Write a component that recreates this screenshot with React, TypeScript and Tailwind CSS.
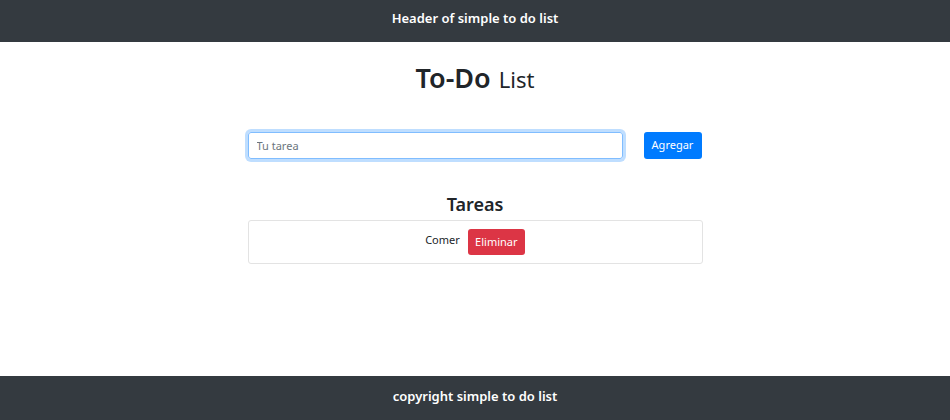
import React from "react";

export default function App() {
  return (
    <div className="flex h-[420px] w-[950px] flex-col bg-white text-[#212529]" style={{ fontFamily: '"Noto Sans", "Open Sans", sans-serif' }}>
      <header className="flex h-[42px] items-center justify-center bg-[#343a40] pb-[5px] text-[13px] font-semibold text-white">
        Header of simple to do list
      </header>
      <main className="flex flex-1 flex-col items-center">
        <h1 className="mt-[16px] flex items-baseline gap-[8px] leading-[40px]">
          <span className="text-[27px] font-semibold">To-Do</span>
          <span className="text-[22px] font-normal">List</span>
        </h1>
        <div className="mt-[33px] flex w-[455px] items-center justify-between">
          <input
            placeholder="Tu tarea"
            className="h-[27px] w-[375px] rounded-[3px] border border-[#80bdff] px-[8px] text-[11px] text-[#495057] shadow-[0_0_0_3px_rgba(0,123,255,0.25)] outline-none placeholder:text-[#6c757d]"
          />
          <button className="mr-[1px] h-[27px] w-[58px] rounded-[3px] bg-[#007bff] text-[11px] text-white">Agregar</button>
        </div>
        <h2 className="mt-[32px] text-[18px] font-semibold leading-[26px]">Tareas</h2>
        <div className="mt-[3px] flex h-[44px] w-[455px] items-center justify-center gap-[8px] rounded-[3px] border border-[#e3e3e3]">
          <span className="-mt-[3px] text-[11px]">Comer</span>
          <button className="h-[26px] w-[57px] rounded-[3px] bg-[#dc3545] text-[11px] text-white">Eliminar</button>
        </div>
      </main>
      <footer className="flex h-[44px] items-center justify-center bg-[#343a40] pb-[3px] text-[13px] font-semibold text-white">
        copyright simple to do list
      </footer>
    </div>
  );
}
